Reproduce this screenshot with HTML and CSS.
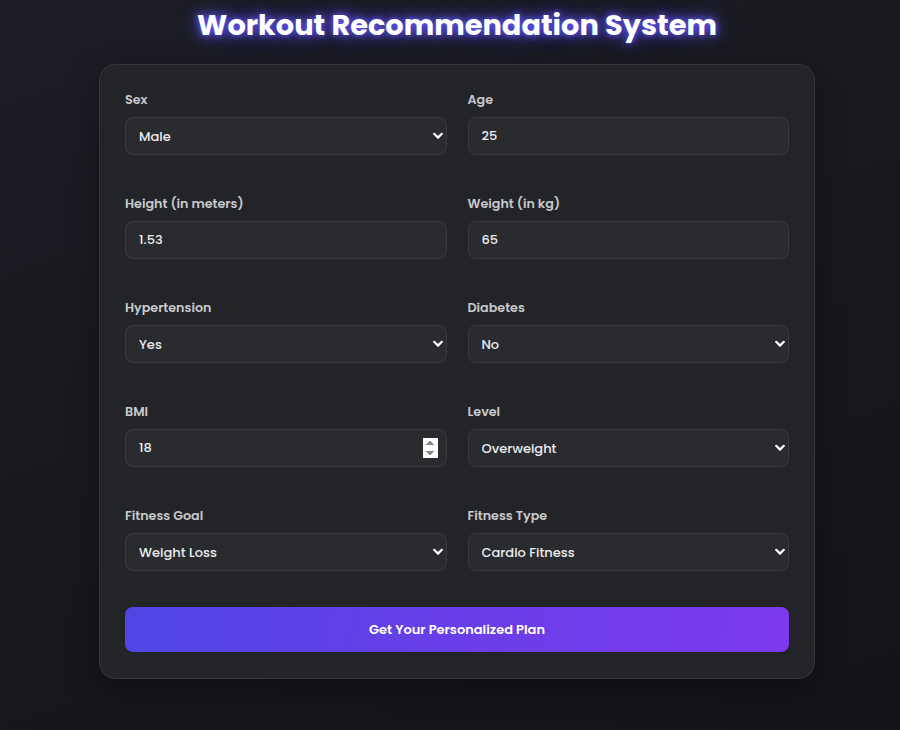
FILE: index.html
```html
<!DOCTYPE html>
<html lang="en">
<head>
<meta charset="utf-8">
<title>Workout Recommendation System</title>
<link rel="stylesheet" href="styles.css">
</head>
<body>
<h1 class="title">Workout Recommendation System</h1>
<form class="card">
  <div class="grid">
    <div class="field">
      <label class="label">Sex</label>
      <select class="control select"><option>Male</option><option>Female</option></select>
    </div>
    <div class="field">
      <label class="label">Age</label>
      <input class="control" type="text" value="25">
    </div>
    <div class="field">
      <label class="label">Height (in meters)</label>
      <input class="control" type="text" value="1.53">
    </div>
    <div class="field">
      <label class="label">Weight (in kg)</label>
      <input class="control" type="text" value="65">
    </div>
    <div class="field">
      <label class="label">Hypertension</label>
      <select class="control select"><option>Yes</option><option>No</option></select>
    </div>
    <div class="field">
      <label class="label">Diabetes</label>
      <select class="control select"><option>No</option><option>Yes</option></select>
    </div>
    <div class="field">
      <label class="label">BMI</label>
      <input class="control number" type="number" value="18">
    </div>
    <div class="field">
      <label class="label">Level</label>
      <select class="control select"><option>Overweight</option></select>
    </div>
    <div class="field">
      <label class="label">Fitness Goal</label>
      <select class="control select"><option>Weight Loss</option></select>
    </div>
    <div class="field">
      <label class="label">Fitness Type</label>
      <select class="control select"><option>Cardio Fitness</option></select>
    </div>
  </div>
  <button class="submit" type="button">Get Your Personalized Plan</button>
</form>
</body>
</html>
```
FILE: styles.css
```css
html, body {
  height: 100%;
}
body {
  margin: 0;
  padding-left: 14px;
  background: linear-gradient(160deg, #1d1e26 0%, #18191e 45%, #131417 100%);
  font-family: "Poppins", "Open Sans", "Liberation Sans", sans-serif;
  color: #e6e6e8;
}
.title {
  margin: 0;
  padding-top: 5px;
  height: 64px;
  box-sizing: border-box;
  text-align: center;
  font-size: 28.8px;
  line-height: 40px;
  font-weight: 700;
  color: #ffffff;
  text-shadow: 0 0 6px rgba(100, 90, 255, 1), 0 0 14px rgba(90, 80, 255, 0.85), 0 0 24px rgba(90, 80, 255, 0.45);
}
.card {
  box-sizing: border-box;
  width: 716px;
  margin: 0 auto;
  padding: 27px 25px 26px;
  background: #232428;
  border: 1px solid #35363b;
  border-radius: 16px;
  box-shadow: 0 10px 30px rgba(0, 0, 0, 0.35);
}
.grid {
  display: grid;
  grid-template-columns: 1fr 1fr;
  column-gap: 21px;
  row-gap: 41px;
}
.field {
  display: flex;
  flex-direction: column;
}
.label {
  font-size: 12.7px;
  font-weight: 600;
  line-height: 16px;
  color: #c9c9cd;
  margin-bottom: 9px;
}
.control {
  box-sizing: border-box;
  height: 38px;
  width: 100%;
  padding: 0 13px;
  background-color: #2a2b2f;
  border: 1px solid #3a3b40;
  border-radius: 8px;
  color: #ececee;
  font-family: inherit;
  font-size: 13px;
  font-weight: 500;
  outline: none;
}
.select {
  appearance: none;
  -webkit-appearance: none;
  background-image: url("data:image/svg+xml;utf8,<svg xmlns='http://www.w3.org/2000/svg' width='10' height='8' viewBox='0 0 10 8'><path d='M1.2 1.8 L5 5.6 L8.8 1.8' fill='none' stroke='white' stroke-width='2.2' stroke-linecap='round' stroke-linejoin='round'/></svg>");
  background-repeat: no-repeat;
  background-position: right 3px center;
  background-size: 10px 8px;
}
.number {
  padding-right: 8px;
}
.number::-webkit-inner-spin-button {
  opacity: 1;
}
.submit {
  display: block;
  width: 100%;
  height: 45px;
  margin-top: 36px;
  border: none;
  border-radius: 8px;
  background: linear-gradient(100deg, #5046e5 0%, #6d3de8 60%, #7c3aed 100%);
  color: #ffffff;
  font-family: inherit;
  font-size: 13px;
  font-weight: 600;
  cursor: pointer;
}
```
